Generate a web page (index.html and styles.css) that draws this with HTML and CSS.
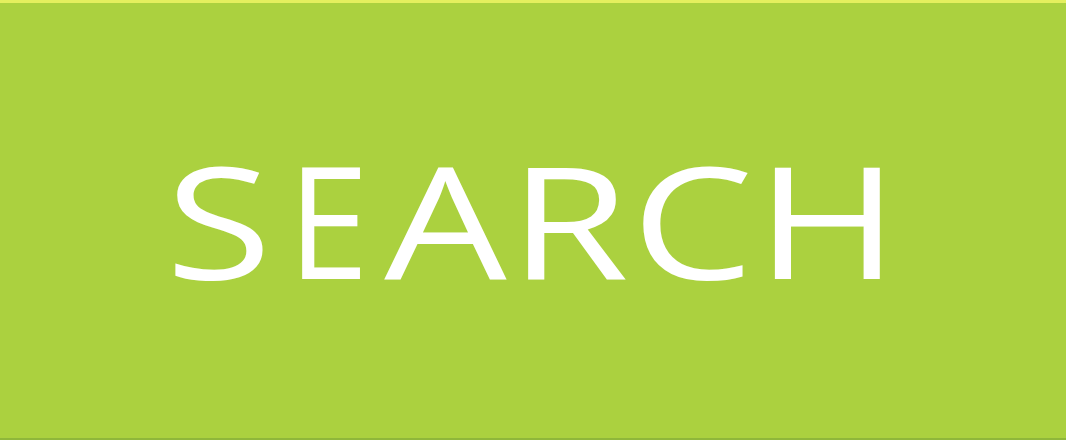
FILE: index.html
```html
<!DOCTYPE html>
<html>
<head>
<meta charset="utf-8">
<link rel="stylesheet" href="styles.css">
</head>
<body>
<div class="button">
  <span class="label">S<span class="narrow">E</span>ARCH</span>
</div>
</body>
</html>
```

FILE: styles.css
```css
html, body {
  margin: 0;
  padding: 0;
  width: 1066px;
  height: 440px;
  overflow: hidden;
}
.button {
  box-sizing: border-box;
  width: 1066px;
  height: 440px;
  background: #abd13f;
  border-top: 3px solid #e4ef5e;
  border-bottom: 2px solid #8fb73a;
  display: flex;
  align-items: center;
  justify-content: center;
}
.label {
  font-family: "Open Sans", "Noto Sans", sans-serif;
  font-size: 155px;
  color: #ffffff;
  letter-spacing: 2px;
  line-height: 1;
  margin-top: -4px;
  display: inline-block;
  transform: scaleX(1.25);
}
.narrow {
  display: inline-block;
  transform: scaleX(0.75);
}
```
